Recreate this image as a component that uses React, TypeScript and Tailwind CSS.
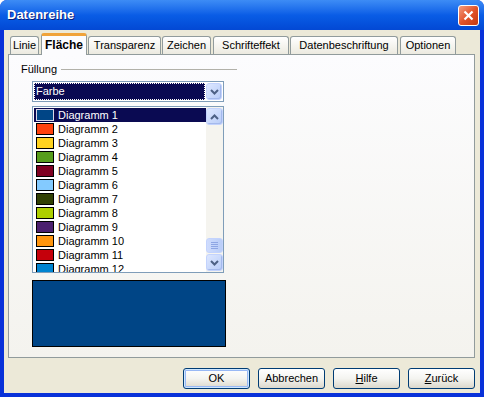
import React from 'react';

const series: [string, string][] = [
  ['Diagramm 1', '#004586'],
  ['Diagramm 2', '#ff420e'],
  ['Diagramm 3', '#ffd320'],
  ['Diagramm 4', '#579d1c'],
  ['Diagramm 5', '#7e0021'],
  ['Diagramm 6', '#83caff'],
  ['Diagramm 7', '#314004'],
  ['Diagramm 8', '#aecf00'],
  ['Diagramm 9', '#4b1f6f'],
  ['Diagramm 10', '#ff950e'],
  ['Diagramm 11', '#c5000b'],
  ['Diagramm 12', '#0084d1'],
];

// label, classes for width + spacing before
const tabs: { label: string; cls: string; active?: boolean }[] = [
  { label: 'Linie', cls: 'ml-[6px] w-[29px]' },
  { label: 'Fläche', cls: 'ml-[2px] w-[46px]', active: true },
  { label: 'Transparenz', cls: 'ml-[1px] w-[73px]' },
  { label: 'Zeichen', cls: 'ml-[1px] w-[49px]' },
  { label: 'Schrifteffekt', cls: 'ml-[2px] w-[76px]' },
  { label: 'Datenbeschriftung', cls: 'ml-[1px] w-[108px]' },
  { label: 'Optionen', cls: 'ml-[2px] w-[56px]' },
];

function Chevron({ up }: { up?: boolean }) {
  return (
    <svg width="9" height="6" viewBox="0 0 9 6">
      <path
        d={up ? 'M1 5 L4.5 1.5 L8 5' : 'M1 1 L4.5 4.5 L8 1'}
        fill="none"
        stroke="#4d6185"
        strokeWidth="2"
      />
    </svg>
  );
}

function ScrollButton({ up, className = '' }: { up?: boolean; className?: string }) {
  return (
    <div
      className={`flex items-center justify-center rounded-[3px] border border-[#c3d3fd] bg-gradient-to-br from-[#dde7ff] to-[#b9cdf8] shadow-[inset_-1px_-1px_0_#a4b9ec] ${className}`}
    >
      <Chevron up={up} />
    </div>
  );
}

function Button({ children, primary }: { children: React.ReactNode; primary?: boolean }) {
  return (
    <button
      className={`w-[67px] h-[21px] rounded-[3px] border border-[#003c74] bg-gradient-to-b from-[#ffffff] via-[#f4f4f0] to-[#dcd8cc] text-[11px] text-black ${
        primary ? 'shadow-[inset_0_0_0_1px_#cee7ff,inset_0_0_0_2px_#98b8f5]' : ''
      }`}
    >
      {children}
    </button>
  );
}

export default function App() {
  return (
    <div
      className="w-[484px] h-[397px] flex flex-col bg-[#0831d9] rounded-t-[7px] overflow-hidden text-[11px] text-black"
      style={{ fontFamily: '"Liberation Sans", Arial, sans-serif' }}
    >
      {/* Title bar */}
      <div className="h-[30px] flex items-center justify-between pl-[7px] pr-[5px] bg-gradient-to-b from-[#3d8cf5] via-[#0a5de6] to-[#0348d4]">
        <span className="text-white font-bold text-[13px] [text-shadow:1px_1px_0_#0a1e7a]">Datenreihe</span>
        <div className="w-[21px] h-[21px] rounded-[3px] border border-white bg-gradient-to-br from-[#f29b7d] via-[#e2542a] to-[#c4380f] flex items-center justify-center">
          <svg width="11" height="11" viewBox="0 0 11 11">
            <path d="M1.5 1.5 L9.5 9.5 M9.5 1.5 L1.5 9.5" stroke="white" strokeWidth="2.2" />
          </svg>
        </div>
      </div>

      {/* Body */}
      <div className="flex-1 ml-[4px] mr-[4px] mb-[4px] bg-[#ece9d8] flex flex-col pt-[3px]">
        {/* Tabs */}
        <div className="h-[21px] flex items-end relative z-10">
          {tabs.map((t) =>
            t.active ? (
              <div
                key={t.label}
                className={`${t.cls} h-[22px] -mb-[1px] rounded-t-[3px] border-x border-[#919b9c] border-t-[3px] border-t-[#f0a33a] bg-[#fcfcfe] flex items-center justify-center font-bold text-[12px] pb-[2px]`}
              >
                {t.label}
              </div>
            ) : (
              <div
                key={t.label}
                className={`${t.cls} h-[18px] rounded-t-[3px] border border-b-0 border-[#919b9c] bg-gradient-to-b from-[#ffffff] to-[#eceae0] flex items-center justify-center`}
              >
                {t.label}
              </div>
            )
          )}
        </div>

        {/* Tab panel */}
        <div className="ml-[4px] mr-[5px] h-[304px] border border-[#919b9c] bg-gradient-to-b from-[#fcfcfe] to-[#f4f3ee] flex flex-col">
          <div className="mt-[7px] ml-[12px] flex items-center h-[14px]">
            <span>Füllung</span>
            <div className="ml-[4px] w-[176px] h-px bg-[#b2b1a9]" />
          </div>

          {/* Dropdown */}
          <div className="mt-[5px] ml-[23px] w-[192px] h-[21px] border border-[#7f9db9] bg-white flex p-[1px]">
            <div className="flex-1 bg-[#0a0a52] text-white flex items-center pl-[2px] outline outline-1 outline-dotted outline-white -outline-offset-1">
              Farbe
            </div>
            <ScrollButton className="w-[16px] ml-[1px]" />
          </div>

          {/* List */}
          <div className="mt-[4px] ml-[23px] w-[192px] h-[167px] border border-[#7f9db9] bg-white flex">
            <div className="flex-1 overflow-hidden pt-[1px] pl-[1px]">
              {series.map(([name, color], i) => {
                const sel = i === 0;
                return (
                  <div
                    key={name}
                    className={`h-[14px] flex items-center ${sel ? 'bg-[#0a0a52] text-white' : ''}`}
                  >
                    <div
                      className={`ml-[2px] w-[18px] h-[12px] border ${sel ? 'border-[#d8d8e8]' : 'border-black'}`}
                      style={{ backgroundColor: color }}
                    />
                    <span className="ml-[4px]">{name}</span>
                  </div>
                );
              })}
            </div>
            <div className="w-[17px] flex flex-col bg-[#f5f4ef] py-[1px]">
              <ScrollButton up className="h-[17px]" />
              <div className="flex-1" />
              <div className="h-[15px] rounded-[3px] border border-[#c3d3fd] bg-gradient-to-r from-[#cfdcfd] to-[#b9cdf8] flex flex-col items-center justify-center gap-[1px]">
                <div className="w-[7px] h-px bg-[#8ea6e4]" />
                <div className="w-[7px] h-px bg-[#8ea6e4]" />
                <div className="w-[7px] h-px bg-[#8ea6e4]" />
                <div className="w-[7px] h-px bg-[#8ea6e4]" />
              </div>
              <ScrollButton className="h-[17px] mt-[1px]" />
            </div>
          </div>

          {/* Preview */}
          <div className="mt-[7px] ml-[23px] w-[194px] h-[67px] border border-black bg-[#004586]" />
        </div>

        {/* Buttons */}
        <div className="mt-[10px] flex justify-end gap-[8px] pr-[5px]">
          <Button primary>OK</Button>
          <Button>Abbrechen</Button>
          <Button>
            <span className="underline">H</span>ilfe
          </Button>
          <Button>
            <span className="underline">Z</span>urück
          </Button>
        </div>
      </div>
    </div>
  );
}
